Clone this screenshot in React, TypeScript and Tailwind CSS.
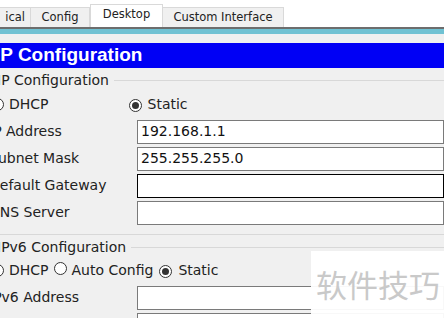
import React from 'react'

const font = { fontFamily: '"DejaVu Sans", Tahoma, sans-serif' }

function Radio({ checked }: { checked?: boolean }) {
  return (
    <span className="relative inline-flex h-[13px] w-[13px] flex-shrink-0 items-center justify-center rounded-full border border-[#333] bg-white">
      {checked && <span className="h-[7px] w-[7px] rounded-full bg-[#333]" />}
    </span>
  )
}

function Field({ label, value, dark }: { label: string; value?: string; dark?: boolean }) {
  return (
    <div className="flex h-[27px] items-center">
      <span className="-ml-[2px] w-[148px] flex-shrink-0 text-[14px] text-[#222]">{label}</span>
      <div
        className={`flex h-[24px] flex-1 items-center bg-white pl-[3px] text-[14px] text-[#111] ${
          dark ? 'border border-black' : 'border border-[#7a7a7a]'
        }`}
      >
        {value}
      </div>
    </div>
  )
}

function GroupTitle({ text }: { text: string }) {
  return (
    <div className="flex h-[20px] items-center">
      <span className="pl-[6px] pr-[5px] text-[14px] text-[#222]">{text}</span>
      <div className="h-px flex-1 bg-[#d8d8d8]" />
    </div>
  )
}

export default function App() {
  return (
    <div className="relative h-[318px] w-[444px] overflow-hidden bg-[#f0f0f0]" style={font}>
      {/* tabs */}
      <div className="flex h-[27px] items-end bg-white">
        <div className="flex h-[20px] w-[31px] items-center justify-end border-r border-t border-[#d9d9d9] bg-[#f0f0f0] pr-[5px] text-[11.5px] text-[#222]">
          ical
        </div>
        <div className="flex h-[20px] w-[59px] items-center justify-center border-r border-t border-[#d9d9d9] bg-[#f0f0f0] text-[11.5px] text-[#222]">
          Config
        </div>
        <div className="flex h-[23px] w-[73px] items-center justify-center border-x border-t border-[#d9d9d9] bg-white pb-[2px] text-[11.5px] text-[#222]">
          Desktop
        </div>
        <div className="flex h-[20px] w-[121px] items-center justify-center border-r border-t border-[#d9d9d9] bg-[#f0f0f0] text-[11.5px] text-[#222]">
          Custom Interface
        </div>
      </div>
      <div className="h-[2px] bg-[#6d6d6d]" />
      <div className="h-[5px] bg-[#6fc2d3]" />
      <div className="h-[9px] bg-[#eef0f0]" />

      {/* header */}
      <div className="flex h-[25px] items-center bg-[#0000f5]">
        <span
          className="-ml-[5px] text-[19px] font-bold text-white"
          style={{ fontFamily: '"Liberation Sans", Arial, sans-serif' }}
        >
          IP Configuration
        </span>
      </div>

      {/* content */}
      <div className="-ml-[9px]">
        <div className="mt-[2px]">
          <GroupTitle text="IP Configuration" />
        </div>
        <div className="mt-[2px] flex h-[24px] items-center text-[14px] text-[#222]">
          <Radio />
          <span className="ml-[5px]">DHCP</span>
          <span className="ml-[80px]">
            <Radio checked />
          </span>
          <span className="ml-[6px]">Static</span>
        </div>
        <div className="mt-[2px]">
          <Field label="IP Address" value="192.168.1.1" />
          <Field label="Subnet Mask" value="255.255.255.0" />
          <Field label="Default Gateway" dark />
          <Field label="DNS Server" />
        </div>
        <div className="mt-[8px] h-px bg-[#d8d8d8]" />
        <div className="mt-[2px]">
          <GroupTitle text="IPv6 Configuration" />
        </div>
        <div className="mt-[1px] flex h-[24px] items-center text-[14px] text-[#222]">
          <Radio />
          <span className="ml-[5px]">DHCP</span>
          <span className="ml-[5px]">
            <Radio />
          </span>
          <span className="ml-[5px]">Auto Config</span>
          <span className="ml-[6px]">
            <Radio checked />
          </span>
          <span className="ml-[6px]">Static</span>
        </div>
        <div className="mt-[2px]">
          <Field label="IPv6 Address" />
          <Field label="" />
        </div>
      </div>

      {/* watermark */}
      <div
        className="absolute left-[311px] top-[251px] flex h-[67px] w-[133px] items-center bg-white/95 pl-[5px] text-[31px] text-[#c9c9c9]"
        style={{ fontFamily: '"Noto Sans CJK SC", sans-serif' }}
      >
        软件技巧
      </div>
    </div>
  )
}
